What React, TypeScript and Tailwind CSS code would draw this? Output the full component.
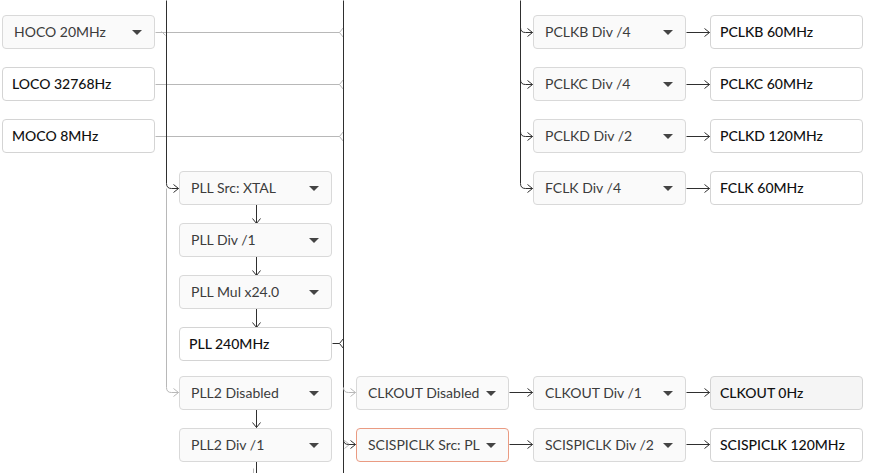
import React from 'react'

type Node = {
  x: number
  y: number
  label: string
  select?: boolean
  muted?: boolean
  active?: boolean
}

const COL = [2, 179, 356, 533, 710]

const nodes: Node[] = [
  { x: COL[0], y: 15, label: 'HOCO 20MHz', select: true },
  { x: COL[0], y: 67, label: 'LOCO 32768Hz' },
  { x: COL[0], y: 119, label: 'MOCO 8MHz' },
  { x: COL[1], y: 171, label: 'PLL Src: XTAL', select: true },
  { x: COL[1], y: 223, label: 'PLL Div /1', select: true },
  { x: COL[1], y: 275, label: 'PLL Mul x24.0', select: true },
  { x: COL[1], y: 327, label: 'PLL 240MHz' },
  { x: COL[1], y: 376, label: 'PLL2 Disabled', select: true },
  { x: COL[1], y: 428, label: 'PLL2 Div /1', select: true },
  { x: COL[2], y: 376, label: 'CLKOUT Disabled', select: true },
  { x: COL[2], y: 428, label: 'SCISPICLK Src: PLL', select: true, active: true },
  { x: COL[3], y: 15, label: 'PCLKB Div /4', select: true },
  { x: COL[3], y: 67, label: 'PCLKC Div /4', select: true },
  { x: COL[3], y: 119, label: 'PCLKD Div /2', select: true },
  { x: COL[3], y: 171, label: 'FCLK Div /4', select: true },
  { x: COL[3], y: 376, label: 'CLKOUT Div /1', select: true },
  { x: COL[3], y: 428, label: 'SCISPICLK Div /2', select: true },
  { x: COL[4], y: 15, label: 'PCLKB 60MHz' },
  { x: COL[4], y: 67, label: 'PCLKC 60MHz' },
  { x: COL[4], y: 119, label: 'PCLKD 120MHz' },
  { x: COL[4], y: 171, label: 'FCLK 60MHz' },
  { x: COL[4], y: 376, label: 'CLKOUT 0Hz', muted: true },
  { x: COL[4], y: 428, label: 'SCISPICLK 120MHz' },
]

const DARK = '#2f2f2f'
const GREY = '#b8b8b8'

// open arrow head pointing right, tip at (x, y)
function headRight(x: number, y: number, c: string, k: string) {
  return <path key={k} d={`M${x - 5} ${y - 4} L${x} ${y} L${x - 5} ${y + 4}`} stroke={c} fill="none" />
}
function headDown(x: number, y: number, c: string, k: string) {
  return <path key={k} d={`M${x - 4} ${y - 5} L${x} ${y} L${x + 4} ${y - 5}`} stroke={c} fill="none" />
}
// "<" marker where an input joins a bus
function joinMark(x: number, y: number, c: string, k: string) {
  return <path key={k} d={`M${x} ${y - 5} L${x - 4} ${y} L${x} ${y + 5}`} stroke={c} fill="none" />
}
// vertical bus turning right into a box
function elbow(bx: number, y: number, tx: number, c: string, k: string) {
  return (
    <g key={k}>
      <path d={`M${bx} ${y - 5} Q${bx} ${y} ${bx + 5} ${y} L${tx} ${y}`} stroke={c} fill="none" />
      {headRight(tx, y, c, k + 'h')}
    </g>
  )
}

function Wires() {
  const rows = [32, 84, 136, 188]
  return (
    <svg className="absolute left-0 top-0" width={885} height={473}>
      <g transform="translate(0.5 0.5)">
        {/* source lines into the main bus */}
        {rows.slice(0, 3).map((y, i) => (
          <g key={'src' + i}>
            <line x1={155} y1={y} x2={339} y2={y} stroke={GREY} />
            {joinMark(343, y, GREY, 'sj' + i)}
          </g>
        ))}
        <path d="M161 31 L165 35" stroke={GREY} fill="none" />

        {/* pll source bus */}
        <path d="M166 0 L166 183" stroke={DARK} fill="none" />
        {elbow(166, 188, 178, DARK, 'pllsrc')}
        <path d="M166 188 L166 387" stroke={GREY} fill="none" />
        {elbow(166, 392, 178, GREY, 'pll2src')}

        {/* main bus */}
        <path d="M343 0 L343 473" stroke={DARK} fill="none" />
        <line x1={332} y1={343} x2={339} y2={343} stroke={DARK} />
        {joinMark(343, 343, DARK, 'pj')}
        {elbow(343, 392, 355, GREY, 'clkoutsrc')}
        {headRight(349, 444, GREY, 'scig')}
        {elbow(343, 444, 355, DARK, 'scisrc')}

        {/* peripheral bus */}
        <path d="M520 0 L520 183" stroke={DARK} fill="none" />
        {rows.map((y, i) => elbow(520, y, 532, DARK, 'pb' + i))}

        {/* PLL chain */}
        {[204, 256, 308].map((y, i) => (
          <g key={'pd' + i}>
            <line x1={256} y1={y} x2={256} y2={y + 19} stroke={DARK} />
            {headDown(256, y + 19, DARK, 'pdh' + i)}
          </g>
        ))}
        <line x1={256} y1={409} x2={256} y2={427} stroke={DARK} />
        {headDown(256, 427, DARK, 'p2h')}
        <line x1={256} y1={461} x2={256} y2={473} stroke={DARK} />
        <line x1={253} y1={468} x2={253} y2={473} stroke={GREY} />

        {/* divider -> output */}
        {[32, 84, 136, 188, 392, 444].map((y, i) => (
          <g key={'o' + i}>
            <line x1={686} y1={y} x2={709} y2={y} stroke={DARK} />
            {headRight(709, y, DARK, 'oh' + i)}
          </g>
        ))}
        {[392, 444].map((y, i) => (
          <g key={'m' + i}>
            <line x1={509} y1={y} x2={532} y2={y} stroke={DARK} />
            {headRight(532, y, DARK, 'mh' + i)}
          </g>
        ))}
      </g>
    </svg>
  )
}

function Box({ n }: { n: Node }) {
  const base =
    'absolute flex items-center h-[34px] w-[153px] pb-[2px] rounded-[4px] text-[14px] whitespace-nowrap overflow-hidden'
  if (n.select) {
    return (
      <div
        className={`${base} bg-[#fafafa] pl-[11px] pr-[12px] text-[#3c3c3c] ${
          n.active ? 'border-[1.5px] border-[#ea9b82]' : 'border border-[#d9d9d9]'
        }`}
        style={{ left: n.x, top: n.y }}
      >
        <span className="flex-1 overflow-hidden">{n.label}</span>
        <span className="ml-[6px] mt-[2px] h-0 w-0 shrink-0 border-x-[5px] border-t-[5px] border-x-transparent border-t-[#444]" />
      </div>
    )
  }
  return (
    <div
      className={`${base} border border-[#d4d4d4] pl-[9px] font-medium text-[#111] ${n.muted ? 'bg-[#f5f5f5]' : 'bg-white'}`}
      style={{ left: n.x, top: n.y }}
    >
      {n.label}
    </div>
  )
}

export default function App() {
  return (
    <div className="relative h-[473px] w-[885px] overflow-hidden bg-white font-['Lato','Liberation_Sans',sans-serif]">
      <Wires />
      {nodes.map((n) => (
        <Box key={n.label} n={n} />
      ))}
    </div>
  )
}
